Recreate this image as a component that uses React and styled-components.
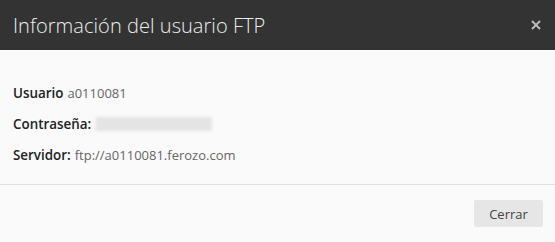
import React from 'react';
import styled, { createGlobalStyle } from 'styled-components';

const Global = createGlobalStyle`
  html, body { margin: 0; padding: 0; background: #fafafa; }
  body { font-family: "Open Sans", "Noto Sans", sans-serif; }
`;

const Modal = styled.div`
  width: 555px;
  height: 242px;
  background: #fafafa;
  display: flex;
  flex-direction: column;
`;

const Header = styled.div`
  height: 50px;
  background: #333333;
  display: flex;
  align-items: center;
  justify-content: space-between;
  padding: 0 12px 0 13px;
  box-sizing: border-box;
`;

const Title = styled.h4`
  margin: 0;
  font-size: 20px;
  font-weight: 300;
  color: #eeeeee;
  letter-spacing: 0.05px;
`;

const Close = styled.button`
  border: none;
  background: none;
  padding: 0;
  width: 14px;
  height: 14px;
  display: flex;
  align-items: center;
  justify-content: center;
  cursor: pointer;
`;

const Body = styled.div`
  padding: 34px 13px 0;
  height: 135px;
  box-sizing: border-box;
  border-bottom: 1px solid #e0e0e0;
  display: flex;
  flex-direction: column;
  gap: 13px;
`;

const Row = styled.div`
  display: flex;
  align-items: center;
  height: 18px;
  font-size: 13.4px;
`;

const Label = styled.span`
  font-weight: 600;
  color: #222;
  margin-right: 4px;
`;

const Value = styled.span`
  color: #666;
  font-size: 13px;
`;

const Blur = styled.span`
  display: inline-block;
  width: 116px;
  height: 14px;
  background: #e4e4e4;
  filter: blur(1.5px);
  margin-left: 1px;
`;

const Footer = styled.div`
  display: flex;
  justify-content: flex-end;
  padding: 15px 12px 0;
`;

const Button = styled.button`
  width: 69px;
  height: 27px;
  border: none;
  border-radius: 2px;
  background: #e6e6e6;
  color: #444;
  font-family: "Open Sans", sans-serif;
  font-size: 13px;
  padding: 0;
  cursor: pointer;
`;

export default function App() {
  return (
    <>
      <Global />
      <Modal>
        <Header>
          <Title>Información del usuario FTP</Title>
          <Close aria-label="Cerrar">
            <svg width="10" height="10" viewBox="0 0 10 10">
              <path d="M1 1 L9 9 M9 1 L1 9" stroke="#bbbbbb" strokeWidth="2" />
            </svg>
          </Close>
        </Header>
        <Body>
          <Row>
            <Label>Usuario</Label>
            <Value>a0110081</Value>
          </Row>
          <Row>
            <Label>Contraseña:</Label>
            <Blur />
          </Row>
          <Row>
            <Label>Servidor:</Label>
            <Value>ftp://a0110081.ferozo.com</Value>
          </Row>
        </Body>
        <Footer>
          <Button>Cerrar</Button>
        </Footer>
      </Modal>
    </>
  );
}
